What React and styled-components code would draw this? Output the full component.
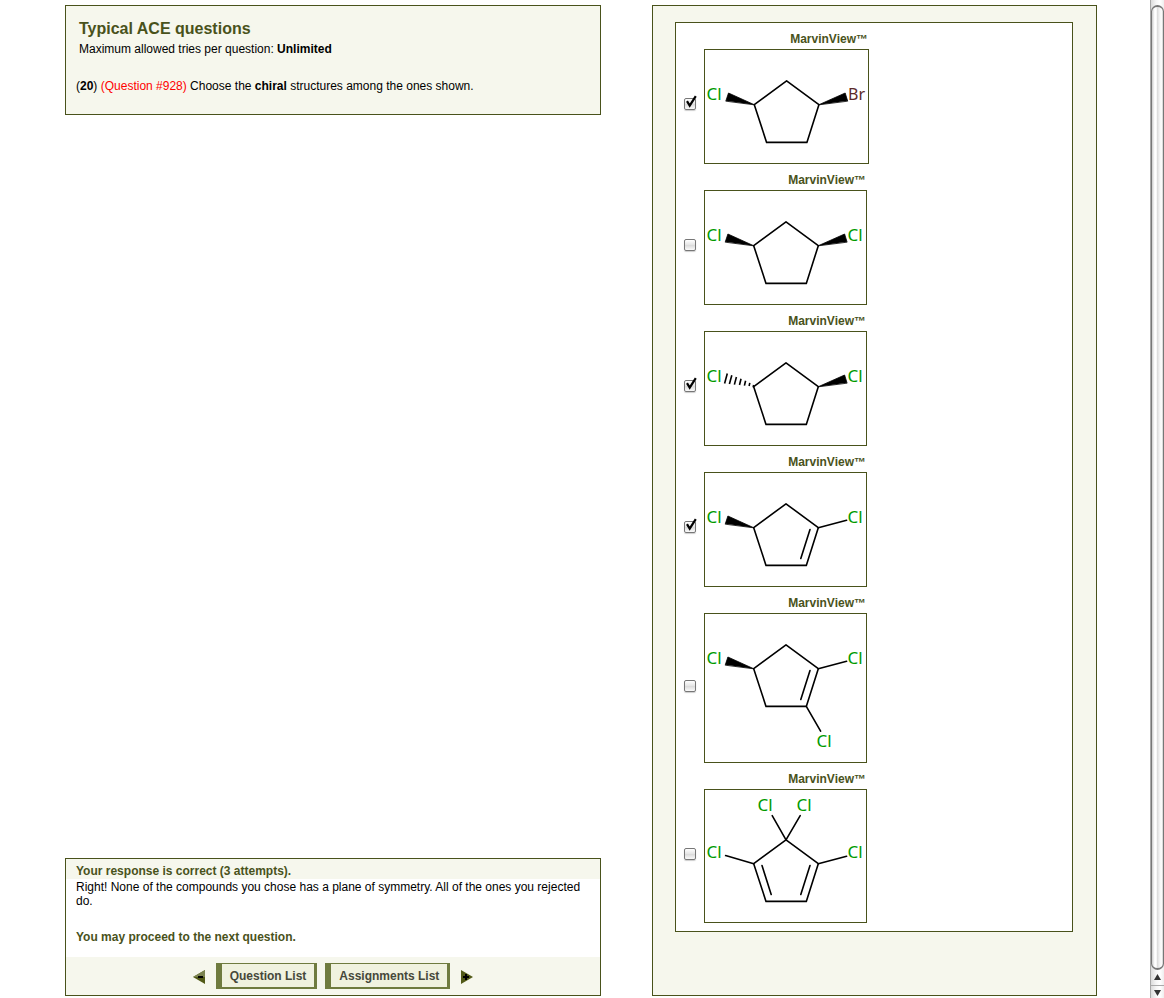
import React from "react";
import styled, { createGlobalStyle } from "styled-components";

const GlobalStyle = createGlobalStyle`
  *, *::before, *::after { box-sizing: border-box; }
  body {
    margin: 0;
    background: #fff;
    color: #000;
    font: 12px/14px "Liberation Sans", Arial, sans-serif;
  }
`;

const olive = "#49521b";
const cream = "#f6f7ed";

const Window = styled.div`
  display: flex;
  min-height: 100vh;
`;

const Page = styled.main`
  flex: 1;
  display: grid;
  grid-template-columns: 536fr 445fr;
  column-gap: 51px;
  padding: 5px 53px 2px 65px;
`;

const LeftColumn = styled.div`
  display: flex;
  flex-direction: column;
  justify-content: space-between;
  gap: 24px;
`;

const QuestionCard = styled.section`
  border: 1px solid ${olive};
  background: ${cream};
  padding: 12px 10px 21px;
`;

const Title = styled.h1`
  margin: 0;
  padding-left: 3px;
  color: ${olive};
  font-size: 16px;
  line-height: 22px;
`;

const Tries = styled.p`
  margin: 2px 0 0;
  padding-left: 3px;
`;

const Question = styled.p`
  margin: 23px 0 0;
`;

const QuestionNumber = styled.span`
  color: #f00;
`;

const FeedbackCard = styled.section`
  border: 1px solid ${olive};
  background: #fff;
`;

const FeedbackTitle = styled.h2`
  margin: 0;
  padding: 5px 10px 1px;
  background: ${cream};
  color: ${olive};
  font-size: 12px;
  line-height: 14px;
`;

const FeedbackBody = styled.div`
  padding: 1px 10px 13px;
`;

const FeedbackText = styled.p`
  margin: 0;
`;

const Proceed = styled.p`
  margin: 22px 0 0;
  color: ${olive};
  font-weight: bold;
`;

const Toolbar = styled.nav`
  display: flex;
  justify-content: center;
  align-items: center;
  gap: 8px;
  padding: 6px 0;
  background: ${cream};
`;

const NavButton = styled.button`
  height: 26px;
  padding: 0 8px;
  border: solid #6f7b3f;
  border-width: 1px 3px 2px 6px;
  background: #f0f2df;
  color: #46483a;
  font: bold 12px/14px "Liberation Sans", Arial, sans-serif;
  white-space: nowrap;
`;

const ArrowButton = styled.button`
  display: flex;
  margin: 2px 3px 0;
  padding: 0;
  border: 0;
  background: none;
`;

const AnswerPanel = styled.section`
  border: 1px solid ${olive};
  background: ${cream};
  padding: 16px 23px 23px 22px;
`;

const AnswerList = styled.ul`
  list-style: none;
  margin: 0;
  padding: 0 8px 8px;
  border: 1px solid ${olive};
  background: #fff;
`;

const AnswerRow = styled.li`
  display: grid;
  grid-template-columns: 20px max-content;
  grid-template-rows: 26px auto;
`;

const Caption = styled.label`
  grid-column: 2;
  justify-self: end;
  padding: 9px 1px 0 0;
  color: ${olive};
  font-weight: bold;
`;

const Tick = styled.span`
  position: relative;
  align-self: center;
  width: 12px;
  height: 12px;
  margin-bottom: 5px;
`;

const TickInput = styled.input`
  appearance: none;
  display: block;
  width: 12px;
  height: 12px;
  margin: 0;
  border: 1px solid #777;
  border-radius: 2px;
  background: linear-gradient(#fff, #e4e4e4 50%, #dcdcdc 55%, #fafafa);
  box-shadow: 0 1px 1px #ccc;

  & + svg { display: none; }
  &:checked + svg { display: block; }
`;

const TickMark = styled.svg`
  position: absolute;
  left: 0;
  bottom: 0;
  pointer-events: none;
`;

const Structure = styled.div`
  border: 1px solid ${olive};
  svg { display: block; }
`;

const Atom = styled.text`
  fill: ${(p) => (p.$bromine ? "#5c2a2a" : "#009a00")};
  font: ${(p) => (p.$bromine ? 16 : 17)}px "Noto Sans", sans-serif;
`;

const Scrollbar = styled.div`
  display: flex;
  flex-direction: column;
  width: 14px;
  padding-top: 5px;
  border-left: 1px solid #a8a8a8;
  background: linear-gradient(90deg, #dcdcdc, #f6f6f6 40%, #fff 70%, #eee);
`;

const Thumb = styled.div`
  flex: 1;
  border: 2px solid #777;
  border-width: 2px 1px;
  border-radius: 7px;
  background: linear-gradient(90deg, #ccc, #fff 25%, #fff 38%, #ddd 50%, #eee 65%, #fff 85%, #ccc);
`;

const Stepper = styled.button`
  display: flex;
  align-items: center;
  justify-content: center;
  height: ${(p) => (p.$last ? 13 : 15)}px;
  padding: ${(p) => (p.$last ? "2px 0 0" : "0 0 2px")};
  border: 0;
  border-top: ${(p) => (p.$last ? "1px solid #aaa" : "0")};
  background: none;
`;

const HASHES = [
  [22.3, 41.5, 19.6, 51.5],
  [26.8, 43.2, 24.4, 52],
  [31.4, 45, 29.4, 52.6],
  [36, 46.8, 34.5, 53],
  [40.6, 48.8, 39.4, 53.6],
  [44.8, 50.8, 44.1, 54],
  [48.6, 53, 48.2, 55.4],
];

function Molecule({ width = 161, height = 113, top = 0, shift = 0, left, right, rightAtom = "Cl", inner = [], below, above }) {
  const sideBaseline = above ? 68 : 50;
  return (
    <svg width={width} height={height} role="img" aria-label="Cyclopentane structure">
      <g transform={`translate(${shift} ${top})`} stroke="#000" strokeWidth="1.6" strokeLinecap="round" strokeLinejoin="round" fill="none">
        <path d="M81 30.8 113.3 54.7 101.3 92.4H61L48.7 54.7Z" />
        {left === "wedge" && <path d="M48.7 54.7 22.9 43 20.3 50.8Z" fill="#000" strokeWidth="0.8" strokeLinejoin="miter" />}
        {left === "plain" && <path d="M48.7 54.7 20.6 46.6" />}
        {left === "hash" &&
          HASHES.map(([a, b, c, d]) => <path key={a} d={`M${a} ${b} ${c} ${d}`} strokeWidth="1.6" strokeLinecap="butt" />)}
        {right === "wedge" && <path d="M113.3 54.7 139.6 43 142 50.8Z" fill="#000" strokeWidth="0.8" strokeLinejoin="miter" />}
        {right === "plain" && <path d="M113.3 54.7 141.6 47.2" />}
        {inner.includes("right") && <path d="M105 56.6 95.8 85.4" />}
        {inner.includes("left") && <path d="M57 56.6 66.2 85.4" />}
        {below && <path d="M101.3 92.4 115.6 117.2" />}
        {above && <path d="M67.2 6.6 81 30.8 95.2 6.6" />}
      </g>
      <Atom x="1.5" y={sideBaseline}>Cl</Atom>
      <Atom x={rightAtom === "Br" ? 143 : 142.6} y={sideBaseline} $bromine={rightAtom === "Br"}>{rightAtom}</Atom>
      {below && <Atom x="111.6" y="133">Cl</Atom>}
      {above && <Atom x="52.6" y="21">Cl</Atom>}
      {above && <Atom x="91.6" y="21">Cl</Atom>}
    </svg>
  );
}

const ANSWERS = [
  { checked: true, molecule: { width: 163, shift: 0.6, left: "wedge", right: "wedge", rightAtom: "Br" } },
  { checked: false, molecule: { left: "wedge", right: "wedge" } },
  { checked: true, molecule: { left: "hash", right: "wedge" } },
  { checked: true, molecule: { left: "wedge", right: "plain", inner: ["right"] } },
  { checked: false, molecule: { height: 148, left: "wedge", right: "plain", inner: ["right"], below: true } },
  { checked: false, molecule: { height: 132, top: 19, left: "plain", right: "plain", inner: ["left", "right"], above: true } },
];

function Answer({ id, checked, molecule }) {
  return (
    <AnswerRow>
      <Caption htmlFor={id}>MarvinView™</Caption>
      <Tick>
        <TickInput type="checkbox" id={id} defaultChecked={checked} />
        <TickMark width="14" height="16" viewBox="0 0 14 16" aria-hidden="true">
          <path d="M3 7.2 5.7 11.6 11.8 2.2" fill="none" stroke="#000" strokeWidth="2.2" />
        </TickMark>
      </Tick>
      <Structure>
        <Molecule {...molecule} />
      </Structure>
    </AnswerRow>
  );
}

export default function App() {
  return (
    <Window>
      <GlobalStyle />
      <Page>
        <LeftColumn>
          <QuestionCard>
            <Title>Typical ACE questions</Title>
            <Tries>Maximum allowed tries per question: <b>Unlimited</b></Tries>
            <Question>
              (<b>20</b>) <QuestionNumber>(Question #928)</QuestionNumber> Choose the <b>chiral</b> structures among the ones shown.
            </Question>
          </QuestionCard>
          <FeedbackCard>
            <FeedbackTitle>Your response is correct (3 attempts).</FeedbackTitle>
            <FeedbackBody>
              <FeedbackText>
                Right! None of the compounds you chose has a plane of symmetry. All of the ones you rejected do.
              </FeedbackText>
              <Proceed>You may proceed to the next question.</Proceed>
            </FeedbackBody>
            <Toolbar>
              <ArrowButton type="button" aria-label="Previous question">
                <svg width="12" height="14">
                  <path d="M0 7 12 0V14Z" fill="#525a18" />
                  <path d="M0 7 12 0V7Z" fill="#7b8350" />
                  <path d="M5 7H10" stroke="#000" strokeWidth="2" />
                </svg>
              </ArrowButton>
              <NavButton type="button">Question List</NavButton>
              <NavButton type="button">Assignments List</NavButton>
              <ArrowButton type="button" aria-label="Next question">
                <svg width="12" height="14">
                  <path d="M0 0 12 7 0 14Z" fill="#525a18" />
                  <path d="M2 7H8M5 4V10" stroke="#000" strokeWidth="2" />
                </svg>
              </ArrowButton>
            </Toolbar>
          </FeedbackCard>
        </LeftColumn>
        <AnswerPanel>
          <AnswerList>
            {ANSWERS.map((a, i) => (
              <Answer key={i} id={`answer-${i + 1}`} {...a} />
            ))}
          </AnswerList>
        </AnswerPanel>
      </Page>
      <Scrollbar>
        <Thumb />
        <Stepper type="button" aria-label="Scroll up">
          <svg width="7" height="6"><path d="M3.5 0 7 6H0Z" fill="#333" /></svg>
        </Stepper>
        <Stepper type="button" aria-label="Scroll down" $last>
          <svg width="7" height="6"><path d="M0 0H7L3.5 6Z" fill="#333" /></svg>
        </Stepper>
      </Scrollbar>
    </Window>
  );
}
